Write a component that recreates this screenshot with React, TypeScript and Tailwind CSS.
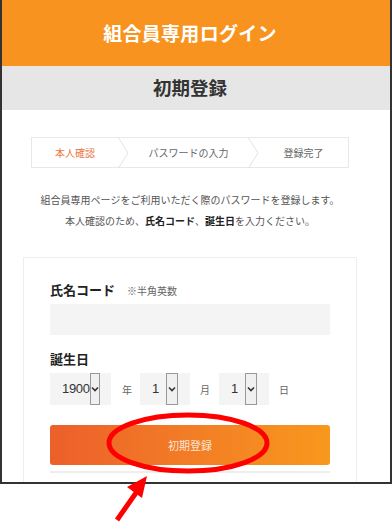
import React from 'react';

const JP = "font-['Noto_Sans_CJK_JP','Noto_Sans',sans-serif]";

const STEPS = ['本人確認', 'パスワードの入力', '登録完了'];

function Chevron() {
  return (
    <svg width="11" height="30" viewBox="0 0 11 30" className="shrink-0">
      <path d="M0.5 0 L10 15 L0.5 30" fill="none" stroke="#e3e3e3" strokeWidth="1" />
    </svg>
  );
}

function DateSelect({ value, width }: { value: string; width: string }) {
  return (
    <div className={`flex h-[32px] items-center justify-between bg-[#f4f4f4] pl-[12px] ${width}`}>
      <span className="text-[13px] tracking-[-0.3px] text-[#333] font-['Liberation_Sans',sans-serif]">{value}</span>
      <span className="mr-[12px] flex h-full w-[12px] items-center justify-center border border-[#999] bg-[#f0f0f0]">
        <svg width="8" height="6" viewBox="0 0 8 6">
          <path d="M1 1.5 L4 4.5 L7 1.5" fill="none" stroke="#333" strokeWidth="1.6" />
        </svg>
      </span>
    </div>
  );
}

export default function App() {
  return (
    <div className={`relative h-[523px] w-[392px] overflow-hidden bg-white ${JP}`}>
      {/* phone frame */}
      <div className="h-[484px] w-[392px] overflow-hidden border-x-2 border-b-2 border-[#333]">
        <div className="flex h-[66px] items-center justify-center bg-[#f7931e] pr-[12px]">
          <h1 className="text-[19px] font-bold tracking-[0.3px] text-white">組合員専用ログイン</h1>
        </div>
        <div className="flex h-[44px] items-center justify-center bg-[#e6e6e6] pr-[12px]">
          <h2 className="text-[18.5px] font-bold text-[#333]">初期登録</h2>
        </div>

        <div className="w-[376px]">
          {/* steps */}
          <div className="ml-[29px] mt-[27px] flex h-[31px] w-[318px] items-center border border-[#e8e8e8] text-[10px] text-[#666]">
            <div className="flex w-[86px] justify-center text-[#e9773f]">{STEPS[0]}</div>
            <Chevron />
            <div className="flex w-[119px] justify-center">{STEPS[1]}</div>
            <Chevron />
            <div className="flex flex-1 justify-center">{STEPS[2]}</div>
          </div>

          <div className="mt-[21px] text-center text-[10px] leading-[21px] text-[#555]">
            <p>組合員専用ページをご利用いただく際のパスワードを登録します。</p>
            <p>
              本人確認のため、<b className="text-[#222]">氏名コード</b>、<b className="text-[#222]">誕生日</b>を入力ください。
            </p>
          </div>

          {/* form card */}
          <div className="ml-[21px] mt-[26px] h-[240px] w-[334px] border border-[#eeeeee] px-[26px] pt-[23px]">
            <div className="flex items-baseline gap-[12px] leading-[18px]">
              <span className="text-[13px] font-bold text-[#222]">氏名コード</span>
              <span className="text-[10px] text-[#666]">※半角英数</span>
            </div>
            <div className="mt-[4px] h-[31px] w-[280px] bg-[#f4f4f4]" />

            <div className="mt-[15px] text-[13px] font-bold leading-[18px] text-[#222]">誕生日</div>
            <div className="mt-[5px] flex items-center text-[10px] text-[#666]">
              <DateSelect value="1900" width="w-[61px]" />
              <span className="ml-[11px] mr-[8px] w-[10px]">年</span>
              <DateSelect value="1" width="w-[50px]" />
              <span className="ml-[10px] mr-[9px] w-[10px]">月</span>
              <DateSelect value="1" width="w-[50px]" />
              <span className="ml-[10px] w-[10px]">日</span>
            </div>

            <button className="mt-[20px] flex h-[40px] w-[280px] items-center justify-center rounded-[3px] bg-gradient-to-r from-[#ec5f2a] to-[#f8981d] text-[11px] text-[#fbe6d6]">
              初期登録
            </button>
            <div className="mt-[6px] h-[2px] w-[280px] bg-[#eeeeee]" />
          </div>
        </div>
      </div>

      {/* annotation: ellipse and arrow */}
      <svg className="pointer-events-none absolute left-0 top-0" width="392" height="523" viewBox="0 0 392 523">
        <ellipse cx="188" cy="443" rx="79" ry="28" fill="none" stroke="#ff0000" strokeWidth="5" />
        <line x1="117" y1="520" x2="138" y2="490" stroke="#ff0000" strokeWidth="5" />
        <polygon points="147,476 127,487 142,498" fill="#ff0000" />
      </svg>
    </div>
  );
}
